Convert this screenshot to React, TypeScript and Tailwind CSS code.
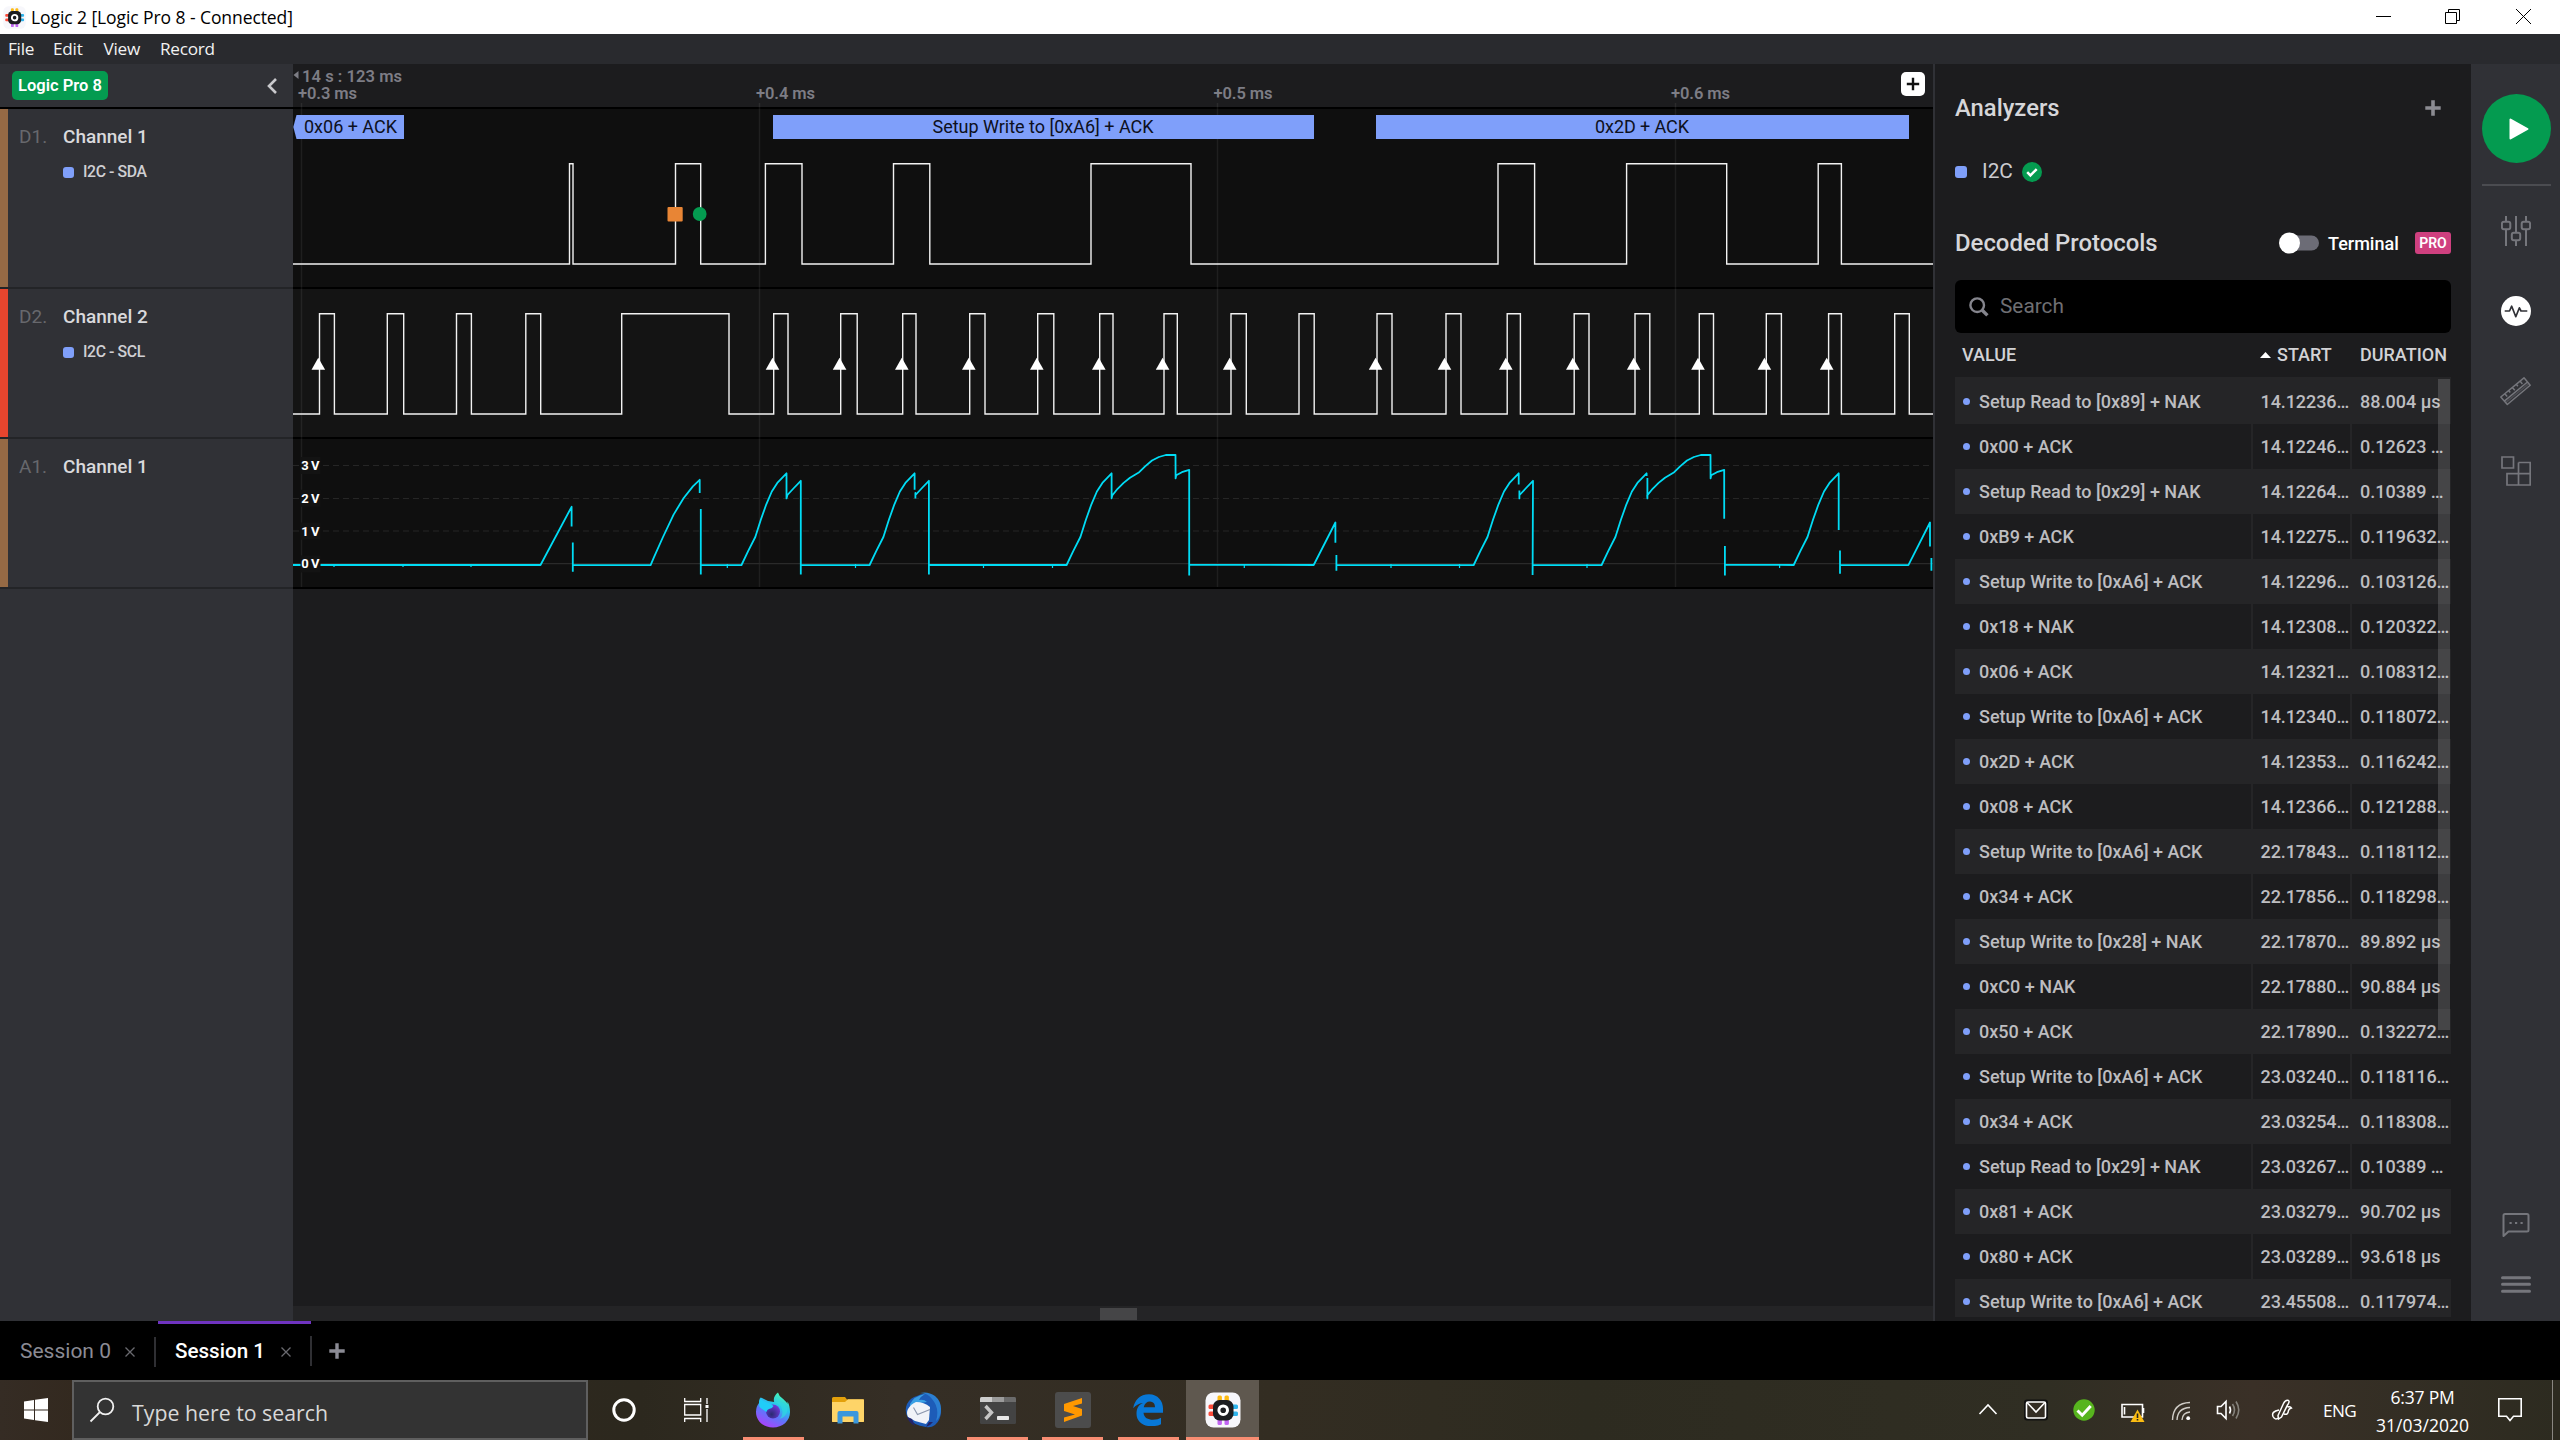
import type { ReactNode } from "react";

const SDA_EDGES = [569.5, 573, 675.5, 700.7, 765.4, 802, 893.5, 929.8, 1091, 1191, 1498, 1534.6, 1626.6, 1726.7, 1818.2, 1841.4];
const SCL_EDGES = [
  319.5, 334.4, 387.3, 403.7, 456.5, 471.4, 525.8, 540.7, 621.7, 729, 773.7, 788, 840.7, 857.2, 902.7, 916, 969.7, 985,
  1037.7, 1053.8, 1099.7, 1113, 1164, 1177.3, 1231, 1246.3, 1299, 1314.2, 1377, 1392, 1446, 1461, 1507.2, 1520.4, 1574.2,
  1589, 1635, 1649.8, 1699.3, 1713.5, 1766.3, 1781.4, 1828.6, 1841.4, 1894.7, 1909.3,
];
const SAMPLE_ARROWS = [318.3, 772.5, 839.6, 901.8, 968.8, 1036.8, 1098.8, 1162.6, 1229.7, 1375.6, 1444.5, 1505.8, 1572.8, 1633.7, 1698, 1764.4, 1826.7];

function square(edges: number[], high: number, low: number) {
  let d = `M293 ${low}`;
  edges.forEach((x, i) => {
    d += `H${x}V${i % 2 === 0 ? high : low}`;
  });
  return d + "H1933";
}

const shift = (pts: [number, number][], dx: number) => pts.map(([x, y]) => `L${(x + dx).toFixed(1)} ${y}`).join("");

const RISE: [number, number][] = [[741.5, 565], [748, 551.4], [755.3, 537], [760.8, 519.8], [766.3, 504.3], [771.8, 491.5], [777.3, 482.9], [786.5, 473.3]];
const SECOND: [number, number][] = [[787.4, 495], [793.9, 488], [800.8, 480.8]];
const PLATEAU: [number, number][] = [
  [1112.2, 495.5], [1117.6, 488.8], [1123.6, 482.9], [1130, 477.7], [1139.2, 472.2], [1145.1, 466.4], [1152, 460.5], [1158.9, 457],
  [1165.8, 455], [1175.5, 454.8], [1175.6, 478.4], [1176.2, 475.3], [1181.9, 472.2], [1189.2, 469.8],
];

const ANALOG = [
  "M293 565H540.5L571.6 506.8V526.6M572.8 542.5V571.8M572.8 565.2H650.6L653.8 557.6L663 537L673.6 514.6L683.7 498L692.9 486.4L699.7 479.8V492.9M700.8 509V574.5M700.8 565.2",
  shift(RISE, 0), "V498.4", shift(SECOND, 0), "V574.5M801 565.2",
  shift(RISE, 128.1), "V489.8M915.4 498.4V493", shift(SECOND, 128.1), "V574.5M929 565",
  shift(RISE, 325.1), "V498.4", shift(PLATEAU, 0), "V575.5M1189.4 564.8",
  "L1313.7 565L1335.4 522.5V542.8M1336.4 554.9V570.7M1336.4 565.2",
  shift(RISE, 732.2), "V484.6M1519.4 490.5V498.4V495", shift(SECOND, 732.2), "L1532.6 575M1533 565.2",
  shift(RISE, 860.1), "V476M1647.4 478V498.4", shift(PLATEAU, 535), "V518.7M1724.9 546V575.5M1725 564.8",
  shift(RISE, 1052.2), "V530M1840 550.4V573.8M1840 565.2",
  "H1908.4L1930 522.5V546.6M1931.4 558V570.7",
].join("");

const ROWS: [string, string, string][] = [
  ["Setup Read to [0x89] + NAK", "14.12236…", "88.004 μs"],
  ["0x00 + ACK", "14.12246…", "0.12623 …"],
  ["Setup Read to [0x29] + NAK", "14.12264…", "0.10389 …"],
  ["0xB9 + ACK", "14.12275…", "0.119632…"],
  ["Setup Write to [0xA6] + ACK", "14.12296…", "0.103126…"],
  ["0x18 + NAK", "14.12308…", "0.120322…"],
  ["0x06 + ACK", "14.12321…", "0.108312…"],
  ["Setup Write to [0xA6] + ACK", "14.12340…", "0.118072…"],
  ["0x2D + ACK", "14.12353…", "0.116242…"],
  ["0x08 + ACK", "14.12366…", "0.121288…"],
  ["Setup Write to [0xA6] + ACK", "22.17843…", "0.118112…"],
  ["0x34 + ACK", "22.17856…", "0.118298…"],
  ["Setup Write to [0x28] + NAK", "22.17870…", "89.892 μs"],
  ["0xC0 + NAK", "22.17880…", "90.884 μs"],
  ["0x50 + ACK", "22.17890…", "0.132272…"],
  ["Setup Write to [0xA6] + ACK", "23.03240…", "0.118116…"],
  ["0x34 + ACK", "23.03254…", "0.118308…"],
  ["Setup Read to [0x29] + NAK", "23.03267…", "0.10389 …"],
  ["0x81 + ACK", "23.03279…", "90.702 μs"],
  ["0x80 + ACK", "23.03289…", "93.618 μs"],
  ["Setup Write to [0xA6] + ACK", "23.45508…", "0.117974…"],
];

function LogicIcon({ className }: { className: string }) {
  return (
    <svg viewBox="0 0 36 36" className={className}>
      <rect x="0.5" y="0.5" width="35" height="35" rx="8" fill="#f7f7fb" />
      <rect x="12.5" y="3.5" width="4.4" height="8" rx="1.5" fill="#fdbb14" />
      <rect x="19.5" y="3.5" width="4.4" height="8" rx="1.5" fill="#fdbb14" />
      <rect x="12.5" y="25" width="4.4" height="8" rx="1.5" fill="#c266f2" />
      <rect x="19.5" y="25" width="4.4" height="8" rx="1.5" fill="#c266f2" />
      <rect x="3.5" y="12.5" width="8" height="4.4" rx="1.5" fill="#fb4b3a" />
      <rect x="3.5" y="19.5" width="8" height="4.4" rx="1.5" fill="#fb4b3a" />
      <rect x="25" y="12.5" width="8" height="4.4" rx="1.5" fill="#2fb4ec" />
      <rect x="25" y="19.5" width="8" height="4.4" rx="1.5" fill="#2fb4ec" />
      <rect x="8" y="8" width="20.5" height="20.5" rx="6.5" fill="#1c1d20" />
      <circle cx="18.2" cy="18.2" r="4.3" fill="none" stroke="#fff" strokeWidth="3" />
    </svg>
  );
}

function TitleBar() {
  return (
    <header className="flex h-[34px] shrink-0 items-center bg-white pl-[3px] font-['Open_Sans',sans-serif] text-black">
      <LogicIcon className="size-[23px]" />
      <span className="ml-[5px] text-[17.5px] tracking-[-0.08px]">Logic 2 [Logic Pro 8 - Connected]</span>
      <svg viewBox="2360 0 200 34" className="ml-auto h-[34px] w-[200px]" fill="none" stroke="#000">
        <path d="M2376 16.5H2391" />
        <path d="M2445.5 12.5h11v11h-11zM2448.5 12.5v-3h11v11h-3" />
        <path d="M2516 9l15 15M2531 9l-15 15" />
      </svg>
    </header>
  );
}

function MenuBar() {
  return (
    <nav className="flex h-[30px] shrink-0 items-center bg-[#292a2e] pl-[8px] font-['Open_Sans',sans-serif] text-[17.2px] tracking-[-0.25px] text-[#f2f2f2]">
      <div className="w-[45px]">File</div>
      <div className="w-[50.500px]">Edit</div>
      <div className="w-[56.500px]">View</div>
      <div>Record</div>
    </nav>
  );
}

function Channel({ id, name, signal, strip, height }: { id: string; name: string; signal?: string; strip: string; height: string }) {
  return (
    <div className={`flex shrink-0 border-b-2 border-[#232427] ${height}`}>
      <div className={`w-2 ${strip}`} />
      <div className="w-[55px] pt-[16px] pl-[11px] text-[19px] leading-6 text-[#67686d]">{id}</div>
      <div className="pt-[16px]">
        <div className="text-[19px] leading-6 font-medium text-[#d9d9dc]">{name}</div>
        {signal && (
          <div className="mt-[11px] flex h-6 items-center">
            <span className="size-[11px] rounded-[3px] bg-[#7f9ffa]" />
            <span className="ml-[9px] text-[15.8px] leading-6 font-medium tracking-[-0.4px] text-[#cfcfd3]">{signal}</span>
          </div>
        )}
      </div>
    </div>
  );
}

function ChannelList() {
  return (
    <aside className="flex w-[293px] shrink-0 flex-col bg-[#303136]">
      <div className="flex h-[45px] shrink-0 items-center border-b-2 border-black pl-3">
        <div className="flex h-[29px] w-[96px] items-center justify-center rounded-[5px] bg-[#049b50] pt-px text-[16.5px] font-semibold whitespace-nowrap text-white">
          Logic Pro 8
        </div>
        <svg viewBox="0 0 12 16" className="ml-[158px] h-4 w-3" fill="none" stroke="#c9c9cd" strokeWidth="2.6"><path d="M10 1L3 8l7 7" /></svg>
      </div>
      <Channel id="D1." name="Channel 1" signal="I2C - SDA" strip="bg-[#966a45]" height="h-[180px]" />
      <Channel id="D2." name="Channel 2" signal="I2C - SCL" strip="bg-[#e6452e]" height="h-[150px]" />
      <Channel id="A1." name="Channel 1" strip="bg-[#966a45]" height="h-[150px]" />
    </aside>
  );
}

function Waveforms() {
  return (
    <svg viewBox="293 64 1640 525" className="h-[525px] w-[1640px] shrink-0 font-['Roboto',sans-serif]">
      <rect x="293" y="64" width="1640" height="43" fill="#1c1c1e" />
      <rect x="293" y="107" width="1640" height="482" fill="#000" />
      <rect x="293" y="109" width="1640" height="178" fill="#0f0f0f" />
      <rect x="293" y="289" width="1640" height="148" fill="#141414" />
      <rect x="293" y="439" width="1640" height="148" fill="#0f0f0f" />
      <path d="M301.5 103V587M759.5 103V587M1217.5 103V587M1675.5 103V587" stroke="#fff" strokeOpacity="0.07" strokeWidth="1.5" />
      <path d="M293 465.5H1933M293 498.5H1933M293 531H1933" stroke="#262626" strokeWidth="1.2" strokeDasharray="6 4" />
      <path d="M293 563.7H1933" stroke="#2a2a2a" strokeWidth="1.2" />

      <g fill="#7d7d85" fontSize="16.5" fontWeight="600">
        <path d="M293.5 75l5-4v8z" />
        <text x="302" y="82" textLength="100">14 s : 123 ms</text>
        <text x="298" y="99" textLength="59">+0.3 ms</text>
        <text x="756" y="99" textLength="59">+0.4 ms</text>
        <text x="1213.5" y="99" textLength="59">+0.5 ms</text>
        <text x="1671" y="99" textLength="59">+0.6 ms</text>
      </g>

      <g fill="#7f9ffa">
        <path d="M296.5 115H404V139H296.5L293.3 127z" />
        <rect x="773" y="115" width="541" height="24" />
        <rect x="1376" y="115" width="533" height="24" />
      </g>
      <g fill="#0d1020" fontSize="18">
        <text x="304" y="133" textLength="93">0x06 + ACK</text>
        <text x="932.5" y="133" textLength="221">Setup Write to [0xA6] + ACK</text>
        <text x="1595" y="133" textLength="94">0x2D + ACK</text>
      </g>

      <g fill="none" stroke="#f2f2f2" strokeWidth="1.4">
        <path d={square(SDA_EDGES, 163.7, 264)} />
        <path d={square(SCL_EDGES, 313.8, 414)} />
      </g>
      <rect x="667.5" y="207" width="15.2" height="14.6" rx="1" fill="#e88535" />
      <circle cx="699.7" cy="214" r="6.9" fill="#049b50" />
      {SAMPLE_ARROWS.map((x) => (
        <path key={x} d={`M${x - 6.8} 369.8L${x} 357.8L${x + 6.8} 369.8z`} fill="#fff" />
      ))}

      <path d={ANALOG} fill="none" stroke="#00dcf5" strokeWidth="1.8" strokeLinejoin="round" />
      <path d="M334 564v3M403 564v3M471 564v3M727.3 564v4M855.5 564v4M983.5 564v4M1052.5 564v4M1244.3 564v4M1391 564v4M1459.5 564v4M1587 564v4M1779.6 564v4" stroke="#00dcf5" strokeWidth="1.2" />
      <g fill="#fff" fontSize="13" fontWeight="700">
        {["3", "2", "1", "0"].map((v, i) => (
          <g key={v}>
            <rect x="300.5" y={457 + i * 32.8} width="20" height="17" fill="#131313" />
            <text x="301.3" y={470.2 + i * 32.700}>{v}<tspan dx="2.300">V</tspan></text>
          </g>
        ))}
      </g>
    </svg>
  );
}

function Graph() {
  return (
    <main className="relative flex w-[1640px] shrink-0 flex-col bg-[#1c1c1e]">
      <Waveforms />
      <button className="absolute top-2 left-[1608px] flex size-6 items-center justify-center rounded-[5px] bg-white">
        <svg viewBox="0 0 14 14" className="size-[14px]" stroke="#111" strokeWidth="2.4"><path d="M7 .8v12.4M.8 7h12.4" /></svg>
      </button>
      <div className="mt-auto h-[15px] bg-[#242426] pt-[2px] pl-[807px]">
        <div className="h-3 w-[37px] bg-[#454547]" />
      </div>
    </main>
  );
}

function AnalyzerPanel() {
  return (
    <section className="flex w-[538px] shrink-0 flex-col border-l-2 border-[#303136] bg-[#1c1c1e] pr-5 pl-5 text-[#d6d6d9]">
      <div className="mt-[28px] flex h-8 items-center justify-between pr-[10px]">
        <span className="pt-px text-[23.800px] font-medium">Analyzers</span>
        <svg viewBox="0 0 16 16" className="size-4" stroke="#8b8b92" strokeWidth="3.6"><path d="M8 .3v15.4M.3 8h15.4" /></svg>
      </div>
      <div className="mt-[33px] flex h-[30px] items-center">
        <span className="size-3 rounded-[3px] bg-[#7f9ffa]" />
        <span className="ml-[15px] text-[20.800px] text-[#cbcbcf]">I2C</span>
        <svg viewBox="0 0 20 20" className="ml-[9px] size-5"><circle cx="10" cy="10" r="10" fill="#049b50" /><path d="M5.2 10.2l3.2 3.2 6.3-6.3" fill="none" stroke="#fff" strokeWidth="2.5" /></svg>
      </div>
      <div className="mt-[40px] flex h-8 items-center">
        <span className="w-[329px] pt-px text-[23.900px] font-medium">Decoded Protocols</span>
        <svg viewBox="0 0 40 22" className="-ml-[5px] h-[22px] w-10"><rect x="5" y="3.5" width="35" height="15" rx="7.5" fill="#6c6c76" /><circle cx="10.5" cy="11" r="10.5" fill="#fff" /></svg>
        <span className="ml-[9px] text-[18px] font-medium text-white">Terminal</span>
        <span className="ml-auto flex h-[22px] w-9 items-center justify-center rounded-[3px] bg-[#cf407f] text-[14px] font-semibold text-white">PRO</span>
      </div>
      <div className="mt-[21px] flex h-[53px] items-center rounded-[6px] bg-black pl-[14px]">
        <svg viewBox="0 0 20 20" className="size-5" fill="none" stroke="#85858d"><circle cx="8.2" cy="8.2" r="6.8" strokeWidth="2.4" /><path d="M13 13l5.4 5.4" strokeWidth="3.4" /></svg>
        <span className="ml-[11px] text-[20.800px] text-[#6f6f73]">Search</span>
      </div>
      <div className="grid h-[44px] grid-cols-[305px_93px_98px] items-center pb-px pl-[7px] text-[18px] font-medium text-[#d2d2d5]">
        <span>VALUE</span>
        <div className="-ml-[7px] flex items-center gap-[6px]">
          <svg viewBox="0 0 11 6" className="h-[6px] w-[11px] fill-white"><path d="M0 6L5.5 0 11 6z" /></svg>
          <span>START</span>
        </div>
        <span>DURATION</span>
      </div>
      <div className="relative h-[940px] overflow-hidden border-t-2 border-[#252527]">
        {ROWS.map(([value, start, duration], i) => (
          <div key={start} className={`grid h-[45px] grid-cols-[298px_99px_99px] text-[18px] leading-[45px] font-medium text-[#bdbdc0] ${i % 2 === 0 ? "bg-[#252527]" : ""}`}>
            <div className="flex items-center border-r-2 border-[#252527] pl-2">
              <span className="mr-[9px] size-[7px] rounded-full bg-[#7f9ffa]" />
              {value}
            </div>
            <div className="border-r-2 border-[#252527] pl-[7.500px] tracking-[-0.08px] whitespace-nowrap">{start}</div>
            <div className="pl-[8px] whitespace-nowrap">{duration}</div>
          </div>
        ))}
        <div className="absolute top-0 right-px h-[651px] w-3 bg-white/15" />
      </div>
    </section>
  );
}

function Rail() {
  return (
    <aside className="flex w-[89px] shrink-0 flex-col items-center bg-[#303136] pt-[30px] text-[#75767c]">
      <button className="ml-[2px] flex size-[69px] items-center justify-center rounded-full bg-[#049b50]">
        <svg viewBox="0 0 20 22" className="ml-[5px] h-[22px] w-5"><path d="M1.5 1.5v19L18.5 11z" fill="#fff" stroke="#fff" strokeWidth="2" strokeLinejoin="round" /></svg>
      </button>
      <div className="mt-[21px] ml-[2px] h-[2px] w-[69px] bg-[#4b4c51]" />
      <svg viewBox="0 0 30 30" className="mt-[30px] size-[30px]" fill="none" stroke="currentColor" strokeWidth="2">
        <path d="M5 0v5.5M5 13.5V30M15 0v16.500M15 24.500V30M25 0v5.500M25 13.500V30" />
        <rect x="0.9" y="5.700" width="8.400" height="7.500" rx="2" />
        <rect x="10.800" y="16.800" width="8.400" height="7.500" rx="2" />
        <rect x="20.700" y="5.700" width="8.400" height="7.500" rx="2" />
      </svg>
      <svg viewBox="0 0 30 30" className="mt-[50px] size-[30px]" fill="none">
        <circle cx="15" cy="15" r="15" fill="#fff" />
        <path d="M3.700 15h4.800l2.200-4.800 4.100 10.500 3.600-8.900 1.600 3.200h6.300" stroke="#303136" strokeWidth="1.7" strokeLinejoin="round" />
      </svg>
      <svg viewBox="0 0 31 29" className="mt-[51px] h-[29px] w-[31px]" fill="none" stroke="currentColor" strokeWidth="1.5" strokeLinejoin="round">
        <path d="M.8 20L24 .8L30.200 8.200L7.300 27.500zM4.300 24.100L27.500 5M4.800 16.700l2.400 2.900M8.600 13.500l1.700 2M12.400 10.400l2.400 2.900M16.200 7.200l1.700 2M20 4.100l2.400 2.900" />
        <path d="M5.700 25.700L28.800 6.600" strokeOpacity="0.400" />
      </svg>
      <svg viewBox="0 0 30 30" className="mt-[50px] size-[30px]" fill="none" stroke="currentColor" strokeWidth="1.7">
        <path d="M1 1h11.500v11H1zM17.500 6.500h11.700v22.500H6V17.700h23.200M17.500 6.500v22.500" />
      </svg>
      <svg viewBox="0 0 28 25" className="mt-auto mb-[38px] h-[25px] w-7" fill="none" stroke="currentColor" strokeWidth="2">
        <path d="M1.500 23V2.500q0-1.500 1.500-1.500H25q1.500 0 1.500 1.500V17q0 1.500-1.500 1.500H6.500z" strokeLinejoin="round" />
        <path d="M7.500 10h2.200M13 10h2.200M18.500 10h2.200" strokeWidth="2.200" />
      </svg>
      <svg viewBox="0 0 30 17" className="mb-[28px] h-[17px] w-[30px]" stroke="currentColor" strokeWidth="3" strokeLinecap="round">
        <path d="M1.500 1.800h27M1.500 8.300h27M1.500 15.200h27" />
      </svg>
    </aside>
  );
}

function Cross() {
  return <svg viewBox="0 0 10 10" className="size-[10px]" stroke="#6a6a70" strokeWidth="1.300"><path d="M.5.500l9 9M9.500.500l-9 9" /></svg>;
}

function SessionTabs() {
  return (
    <div className="flex h-[59px] shrink-0 bg-black text-[21px]">
      <div className="flex w-[158px] items-center pt-[2px] pl-5">
        <span className="w-[105px] text-[#8b8b94]">Session 0</span>
        <Cross />
        <div className="ml-[19px] h-[30px] w-[2px] bg-[#2f2f33]" />
      </div>
      <div className="flex w-[153px] items-center border-t-[3px] border-[#6f33c1] pb-px pl-[17px]">
        <span className="w-[106px] text-[20.600px] font-medium text-white">Session 1</span>
        <Cross />
      </div>
      <div className="mt-[15px] -ml-px h-[30px] w-[2px] bg-[#2f2f33]" />
      <svg viewBox="0 0 16 16" className="mt-[22px] ml-[17px] size-4" stroke="#8b8b94" strokeWidth="3.400"><path d="M8 .3v15.400M.3 8h15.400" /></svg>
    </div>
  );
}

function AppButton({ active, open, width, children }: { active?: boolean; open?: boolean; width: string; children: ReactNode }) {
  return (
    <div className={`flex shrink-0 flex-col items-center ${width} ${active ? "bg-[#5f584f]" : ""}`}>
      <div className="flex h-[57px] items-center justify-center pt-[3px]">{children}</div>
      {open && <div className={`h-[3px] bg-[#f88d72] ${active ? "w-full" : "w-[61px]"}`} />}
    </div>
  );
}

function Taskbar() {
  return (
    <footer className="flex h-[60px] shrink-0 bg-[linear-gradient(90deg,#352c24_0%,#33291f_3%,#2c281e_25%,#352e25_35%,#332d22_50%,#2d2b20_62%,#302e23_80%,#3a3027_88%,#332e24_94%,#2d2b20_100%)] font-['Open_Sans',sans-serif] text-white">
      <div className="flex w-[72px] items-center justify-center">
        <svg viewBox="0 0 24 24" className="size-6 fill-white"><path d="M0 3.400L10 2v9.500H0zM11 1.850L24 0v11.500H11zM0 12.500h10V22L0 20.600zM11 12.500h13V24l-13-1.850z" /></svg>
      </div>
      <div className="flex w-[516px] items-center border-2 border-[#5f5f5f] bg-[#333] pl-[15px]">
        <svg viewBox="0 0 26 26" className="size-[26px]" fill="none" stroke="#f0f0f0" strokeWidth="1.800"><circle cx="16.500" cy="9.500" r="7.800" /><path d="M11 15L1.500 24.500" /></svg>
        <span className="ml-[17px] pt-[5px] text-[21.300px] text-[#d8d8d8]">Type here to search</span>
      </div>
      <div className="flex w-[72px] items-center justify-center">
        <svg viewBox="0 0 24 24" className="size-6" fill="none" stroke="#fff" strokeWidth="3"><circle cx="12" cy="12" r="10.200" /></svg>
      </div>
      <div className="flex w-[76px] items-center justify-center pr-[3px]">
        <svg viewBox="0 0 25 24" className="h-6 w-[25px]" fill="none" stroke="#fff" strokeWidth="1.300">
          <path d="M.7 0v3.500h16V0M.7 6.500h16v10.500h-16zM.7 24v-3.500h16V24M23 0v6M23 11v13" /><path d="M21.500 7h3v3h-3z" fill="#fff" stroke="none" />
        </svg>
      </div>
      <AppButton open width="w-[74px]">
        <svg viewBox="0 0 36 36" className="size-9">
          <defs>
            <linearGradient id="ff" x1="0.850" y1="0" x2="0.350" y2="1"><stop offset="0" stopColor="#4dffa8" /><stop offset=".4" stopColor="#28c4ec" /><stop offset=".65" stopColor="#5c78fb" /><stop offset="1" stopColor="#a843fb" /></linearGradient>
            <radialGradient id="ffi" cx="0.400" cy="0.700" r="0.700"><stop offset="0" stopColor="#2a2a72" /><stop offset="1" stopColor="#7038d8" /></radialGradient>
          </defs>
          <path d="M23 .5c-3.500 2.500-5 6.500-3.800 9.500L13 9 7 6 5.500 5.500Q4.500 8 4 11 1 14.500 1 20c0 9 7.500 15.500 17 15.500S35 29 35 20c0-4-.8-8-2.500-10.500V12C31 9 29 8 27 6q-3-2-4-5.500z" fill="url(#ff)" />
          <circle cx="18" cy="19.500" r="7" fill="url(#ffi)" />
          <path d="M5 6q2 3 7 4.500 4 .5 6.500 3.500-1 2.500-4.500 3-2 .5-2.500 3-3-2-6.500-4.500-2-4 0-9.500z" fill="#20cdf8" />
          <path d="M19 10q8 2 8.500 10 0 4-3 7 7-2 8-9-1-6-6-8z" fill="#2fd8e0" fillOpacity="0.700" />
        </svg>
      </AppButton>
      <AppButton width="w-[75px]">
        <svg viewBox="0 0 32 27" className="h-[27px] w-8">
          <path d="M0 1.500Q0 0 1.500 0H13l2 2.500H32V27H0z" fill="#e3a00b" /><path d="M0 5h13l3-2.800H31Q32 2.200 32 3.200V24q0 1-1 1H1q-1 0-1-1z" fill="#fed468" /><path d="M0 25h32v2H0z" fill="#332d22" />
          <path d="M5.500 26.500V16q0-2 2-2h17q2 0 2 2v10.500h-5v-7h-11v7z" fill="#3b97dc" />
        </svg>
      </AppButton>
      <AppButton width="w-[75px]">
        <svg viewBox="0 0 36 36" className="size-9">
          <path d="M12 4Q20-1 28 4q8 5 8 15 0 9-6 14-4 3-9 2Q8 33 3 26-1 19 2 12q4-7 10-8z" fill="#1d5cb8" />
          <path d="M15 1q8 0 12 6 8 9 4 22 5-4 5-12 0-8-6-13-7-5-15-3z" fill="#2b7fd2" />
          <path d="M5 12q4-8 15-10-4 2-6 6 5-1 8 2-6 1-10 1-4 1-7 5z" fill="#39a0e4" />
          <path d="M3 17q3-5 8-7 8 0 14 5l-1 13-3 4-11-3-7-4q-2-4 0-8z" fill="#f1f3f8" />
          <path d="M8.500 15.500l4 7 12.500-5" fill="none" stroke="#8d98ae" strokeWidth="1.100" />
          <path d="M2 25q2 6 8 9l-3-7zM21 35q4-1 7-5l-4 0z" fill="#23246a" />
        </svg>
      </AppButton>
      <AppButton open width="w-[75px]">
        <svg viewBox="0 0 36 27" className="h-[27px] w-9">
          <rect width="36" height="27" rx="1.500" fill="#434343" /><path d="M1.500 0H12v5H0V1.500Q0 0 1.500 0z" fill="#cdcdcd" /><path d="M12 0h12v5H12z" fill="#9b9b9b" /><path d="M24 0h10.500Q36 0 36 1.500V5H24z" fill="#6b6b6b" />
          <path d="M5.500 9l6 6.500-6 6.500" fill="none" stroke="#c6c6c6" strokeWidth="3.400" /><rect x="17" y="19" width="12" height="4" rx=".8" fill="#e8e8e8" />
        </svg>
      </AppButton>
      <AppButton open width="w-[75px]">
        <svg viewBox="0 0 36 36" className="size-9"><rect width="36" height="36" rx="3" fill="#4c4c4c" /><path d="M27 6L9 12v7l11 3.500-11 3V30l18-6.500V17l-9-3 9-2.500z" fill="#ff9800" /></svg>
      </AppButton>
      <AppButton open width="w-[76px]">
        <svg viewBox="0 0 30 32" className="h-8 w-[30px]"><path d="M.2 14.300C1.500 6 7 .2 16 .2c9 0 14 7 14 14v4.500H10.500c.5 5 4.500 7 9.500 7 3.500 0 6-1 8-2v6.500c-3 1.500-6 2-10 2-9 0-14.500-5.500-14.500-12.500C3.500 14 6 10.500 10 9c-4 .5-7.500 2.300-9.800 5.300zM10.700 13.300h11.300C22 9.500 20 7.800 17 7.500c-3 0-5.500 2-6.300 5.800z" fill="#0878d7" /></svg>
      </AppButton>
      <AppButton active open width="w-[73px]"><LogicIcon className="size-9" /></AppButton>
      <div className="ml-auto flex w-[600px] items-center">
        <svg viewBox="1960 1380 350 60" className="h-[60px] w-[350px]" fill="none" stroke="#fff" strokeWidth="1.600">
          <path d="M1979.500 1414l8.500-9 8.500 9" />
          <rect x="2024" y="1399.500" width="24" height="21" rx="3" fill="#111" stroke="none" /><rect x="2026.500" y="1402" width="19" height="16" rx="1.500" fill="#332d24" /><path d="M2027 1402.500l9 9.500 9-9.500" />
          <circle cx="2084" cy="1410" r="10.700" fill="#57b41e" stroke="none" /><path d="M2077.500 1410.500l4.700 4.700 8.500-9.200" strokeWidth="3" />
          <path d="M2122 1404.500h20.500v12.500H2122zM2124.500 1407v7.500M2143.500 1408v5" /><path d="M2137.500 1409.500l7 12.500h-14z" fill="#fcbd12" stroke="none" /><path d="M2137.500 1413.500v4.500M2137.500 1419v1.500" stroke="#222" />
          <path d="M2172.500 1420q.5-17 17.500-17.500M2177 1420q.5-12 13-12.500M2182 1420q.5-7.500 8-8" stroke="#cfccc6" strokeWidth="1.400" /><circle cx="2188.200" cy="1418.200" r="1.900" fill="#fff" stroke="none" />
          <path d="M2217.500 1406.500h3.500l5-5v17l-5-5h-3.500z" /><path d="M2229.500 1406.500q2 3.500 0 7" /><path d="M2232.500 1404q4 6 0 12M2236 1401.500q5.500 8.500 0 17" stroke="#85827b" />
          <path d="M2288.500 1400.500q-3-1-5 3l-5.500 12 .5 3.500 3-2 6-12q2.500-3.500 1-4.500zM2279 1410q-8 1.500-6 6.500 2 4 5.500 1.500M2284 1414q4 1.500 4.500-3.500.5-2 3-2.500-1-2-4-1" strokeWidth="1.500" />
        </svg>
        <div className="ml-[13px] w-[53px] pt-px text-[17.200px] tracking-[-0.600px]">ENG</div>
        <div className="flex w-[93px] flex-col items-center pt-[2px] text-[17.500px] leading-7 whitespace-nowrap"><span className="tracking-[-0.200px]">6:37 PM</span><span>31/03/2020</span></div>
        <svg viewBox="0 0 24 24" className="ml-[29px] size-6" fill="none" stroke="#fff" strokeWidth="1.600"><path d="M.8.800h22.400v17.400H15.500L12 22.500l-3.500-4.300H.8z" /></svg>
        <div className="ml-[30px] h-full w-px bg-[#8a8781]" />
      </div>
    </footer>
  );
}

export default function App() {
  return (
    <div className="flex h-[1440px] w-[2560px] flex-col overflow-hidden bg-black font-['Roboto',sans-serif]">
      <TitleBar />
      <MenuBar />
      <div className="flex h-[1257px] shrink-0">
        <ChannelList />
        <Graph />
        <AnalyzerPanel />
        <Rail />
      </div>
      <SessionTabs />
      <Taskbar />
    </div>
  );
}
